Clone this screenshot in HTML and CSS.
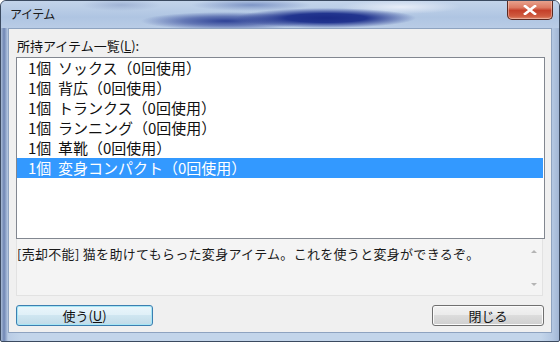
FILE: index.html
```html
<!DOCTYPE html>
<html lang="ja">
<head>
<meta charset="utf-8">
<link rel="stylesheet" href="styles.css">
</head>
<body>
<div class="window">
  <div class="titlebar">
    <span class="title">アイテム</span>
    <button class="close" aria-label="閉じる">
      <svg width="14" height="10" viewBox="0 0 14 10"><path d="M2 1 L12 9 M12 1 L2 9" stroke="#fff" stroke-width="2.6" stroke-linecap="square"/></svg>
    </button>
  </div>
  <div class="frame">
    <div class="client">
      <div class="label">所持アイテム一覧(<u>L</u>):</div>
      <ul class="listbox">
        <li class="row">1個&nbsp;&nbsp;ソックス（0回使用）</li>
        <li class="row">1個&nbsp;&nbsp;背広（0回使用）</li>
        <li class="row">1個&nbsp;&nbsp;トランクス（0回使用）</li>
        <li class="row">1個&nbsp;&nbsp;ランニング（0回使用）</li>
        <li class="row">1個&nbsp;&nbsp;革靴（0回使用）</li>
        <li class="row selected">1個&nbsp;&nbsp;変身コンパクト（0回使用）</li>
      </ul>
      <div class="desc">
        <div class="desc-text">[売却不能] 猫を助けてもらった変身アイテム。これを使うと変身ができるぞ。</div>
        <div class="vscroll">
          <span class="arrow up"></span>
          <span class="arrow down"></span>
        </div>
      </div>
      <div class="buttons">
        <button class="btn default">使う(<u>U</u>)</button>
        <button class="btn close-btn">閉じる</button>
      </div>
    </div>
  </div>
</div>
</body>
</html>
```

FILE: styles.css
```css
* { box-sizing: border-box; }
html, body { margin: 0; padding: 0; }
body {
  width: 560px;
  height: 342px;
  overflow: hidden;
  font-family: "Noto Sans CJK JP", "Noto Sans", sans-serif;
  background: #ffffff;
}
.window {
  width: 560px;
  height: 342px;
  display: flex;
  flex-direction: column;
  border: 1px solid #3b4a60;
  border-radius: 6px 6px 2px 2px;
  background:
    linear-gradient(to right, #a9bcd6 0px, #6f86b4 3px, #b9cce5 7px, #c3d5ea 20px, #c3d5ea 540px, #b2c6e1 552px, #9fb4d3 559px);
  overflow: hidden;
}
.titlebar {
  height: 27px;
  flex: none;
  display: flex;
  align-items: flex-start;
  padding: 0 6px 0 9px;
  background:
    radial-gradient(ellipse 90px 10px at 325px 17px, #1a2a86 0%, #22358f 45%, rgba(40,60,150,0) 100%),
    radial-gradient(ellipse 85px 9px at 225px 20px, #2e4296 0%, rgba(46,66,150,0.6) 50%, rgba(40,60,150,0) 100%),
    radial-gradient(ellipse 60px 7px at 400px 6px, rgba(236,241,250,0.9) 0%, rgba(232,238,248,0) 100%),
    radial-gradient(ellipse 60px 6px at 250px 4px, rgba(110,135,190,0.8) 0%, rgba(126,150,198,0) 100%),
    radial-gradient(ellipse 40px 6px at 120px 4px, rgba(140,160,200,0.6) 0%, rgba(126,150,198,0) 100%),
    linear-gradient(to bottom, #c3d4ea 0%, #afc5e2 60%, #b9cce6 100%);
}
.title {
  font-size: 12px;
  line-height: 12px;
  margin-top: 7px;
  color: #1a1a1a;
  letter-spacing: -0.5px;
}
.close {
  margin-left: auto;
  margin-top: -1px;
  width: 46px;
  height: 20px;
  padding: 0;
  border: 1px solid #5a2a22;
  border-top: none;
  border-radius: 0 0 5px 5px;
  background: linear-gradient(to bottom, #e9a793 0%, #dc7a62 40%, #c5402a 55%, #cf5b40 85%, #e08a6c 100%);
  box-shadow: inset 0 0 0 1px rgba(255,220,210,0.45);
  display: flex;
  align-items: center;
  justify-content: center;
}
.frame {
  flex: 1;
  display: flex;
  padding: 0 7px 8px 7px;
}
.client {
  flex: 1;
  display: flex;
  flex-direction: column;
  background: #f0f0f0;
  border: 1px solid #8ea3c0;
  padding: 8px 6px 6px 7px;
}
.label {
  height: 20px;
  font-size: 13px;
  line-height: 18px;
  padding-left: 1px;
  color: #111;
}
.listbox {
  list-style: none;
  margin: 0;
  padding: 0;
  height: 182px;
  flex: none;
  background: #fff;
  border: 1px solid #828790;
}
.row {
  height: 20px;
  font-size: 15px;
  line-height: 20px;
  padding-left: 11px;
  margin-right: 1px;
  color: #111;
  white-space: nowrap;
}
.row.selected {
  background: #3399ff;
  color: #fff;
}
.desc {
  height: 57px;
  flex: none;
  display: flex;
  margin-right: 2px;
  background: #f4f4f4;
  border: 1px solid #e2e2e2;
  border-top: none;
}
.desc-text {
  flex: 1;
  font-size: 13px;
  line-height: 18px;
  letter-spacing: 0.3px;
  padding: 6px 0 0 0;
  color: #1a1a1a;
  white-space: nowrap;
}
.vscroll {
  width: 16px;
  display: flex;
  flex-direction: column;
  justify-content: space-between;
  align-items: center;
  padding: 11px 0 9px;
}
.arrow {
  width: 0;
  height: 0;
  border-left: 3px solid transparent;
  border-right: 3px solid transparent;
}
.arrow.up { border-bottom: 3px solid #b4b4b4; }
.arrow.down { border-top: 3px solid #b4b4b4; }
.buttons {
  margin-top: 9px;
  height: 21px;
  display: flex;
  justify-content: space-between;
}
.btn {
  height: 21px;
  padding: 0;
  font-family: "Noto Sans CJK JP", "Noto Sans", sans-serif;
  font-size: 13px;
  line-height: 18px;
  color: #111;
  border-radius: 3px;
  background: linear-gradient(to bottom, #f3f3f3 0%, #ebebeb 45%, #dcdcdc 50%, #cfcfcf 100%);
}
.btn.default {
  width: 137px;
  border: 1px solid #3c7fb1;
  box-shadow: inset 0 0 0 1px #a7e6f5;
  background: linear-gradient(to bottom, #eaf6fb 0%, #e0f0f8 45%, #cfe6f1 50%, #c1dbe8 100%);
}
.btn.close-btn {
  width: 112px;
  margin-right: 1px;
  border: 1px solid #707070;
  box-shadow: inset 0 0 0 1px #fbfbfb;
}
u { text-decoration: underline; text-underline-offset: 1px; }
```
